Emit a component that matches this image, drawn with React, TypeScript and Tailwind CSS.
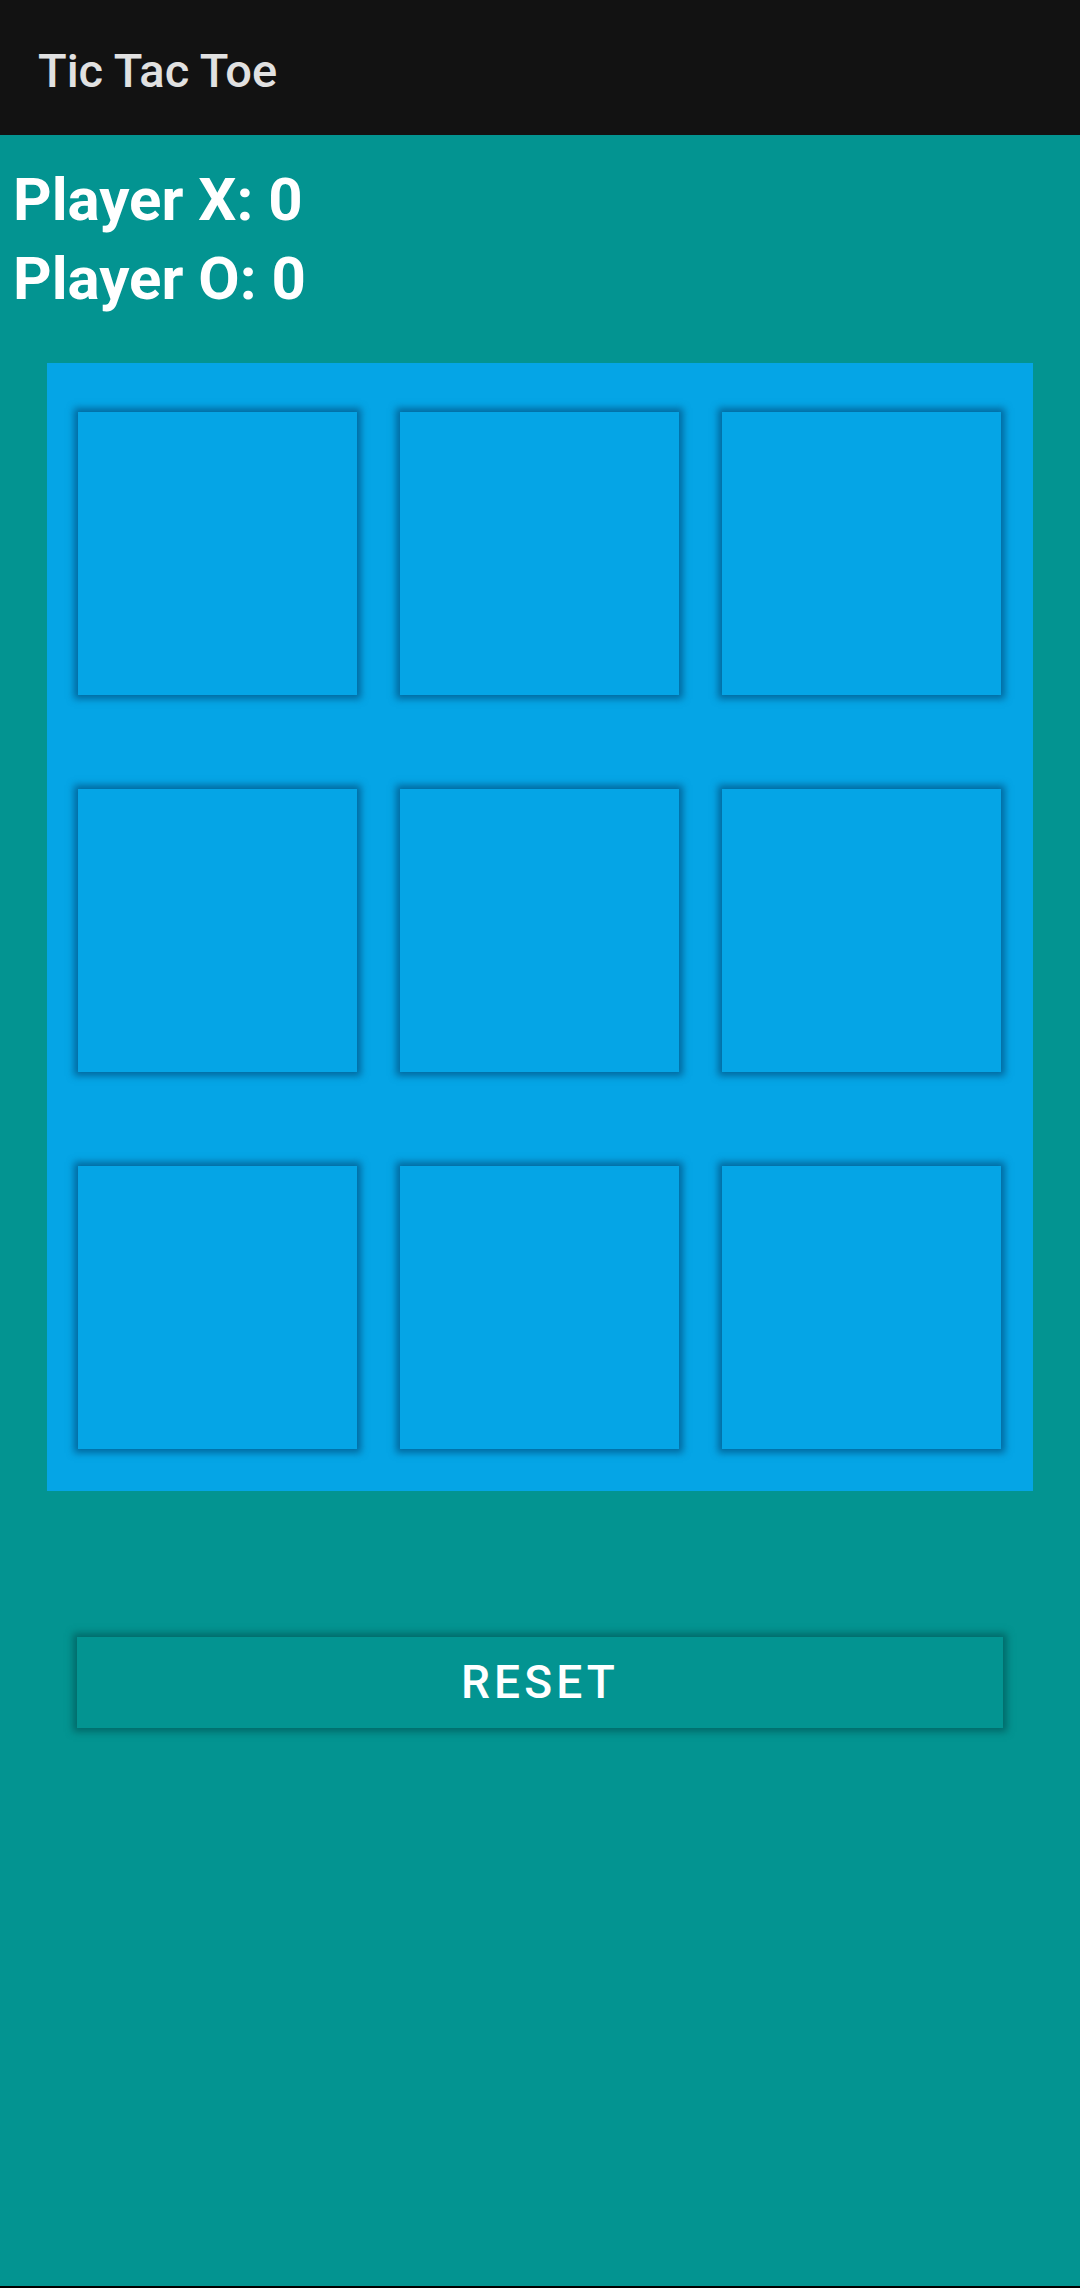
import { useState } from "react";

type Mark = "X" | "O" | null;

export default function App() {
  const [cells, setCells] = useState<Mark[]>(Array(9).fill(null));
  const [turn, setTurn] = useState<"X" | "O">("X");
  const [score] = useState({ X: 0, O: 0 });

  const play = (i: number) => {
    if (cells[i]) return;
    const next = [...cells];
    next[i] = turn;
    setCells(next);
    setTurn(turn === "X" ? "O" : "X");
  };

  const reset = () => {
    setCells(Array(9).fill(null));
    setTurn("X");
  };

  return (
    <div className="w-[1080px] h-[2288px] flex flex-col font-['Roboto',sans-serif] bg-[#039491]">
      {/* Toolbar */}
      <div className="h-[135px] shrink-0 bg-[#121212] flex items-center pl-[38px] pt-[8px]">
        <h1 className="text-[47px] font-medium text-[#e1e1e1]">Tic Tac Toe</h1>
      </div>

      <div className="flex-1 flex flex-col">
        {/* Scores */}
        <div className="pl-[13px] pt-[25px] text-white font-bold text-[60px] leading-[79px]">
          <p>Player X: {score.X}</p>
          <p>Player O: {score.O}</p>
        </div>

        {/* Board */}
        <div className="mx-[47px] mt-[45px] bg-[#05a5e6] pt-[49px] pb-[42px] pl-[31px] pr-[32px] grid grid-cols-[279px_279px_279px] gap-x-[43px] gap-y-[94px]">
          {cells.map((c, i) => (
            <button
              key={i}
              onClick={() => play(i)}
              className="h-[283px] bg-[#05a5e6] shadow-[0_0_7px_4px_rgba(0,85,135,0.75)] flex items-center justify-center text-[160px] font-bold text-white"
            >
              {c}
            </button>
          ))}
        </div>

        {/* Reset */}
        <button
          onClick={reset}
          className="mx-[77px] mt-[146px] h-[91px] bg-[#039491] shadow-[0_0_7px_4px_rgba(0,85,85,0.65)] text-white text-[46px] font-medium tracking-[0.09em] flex items-center justify-center"
        >
          RESET
        </button>
      </div>

      <div className="h-[2px] shrink-0 bg-black" />
    </div>
  );
}
